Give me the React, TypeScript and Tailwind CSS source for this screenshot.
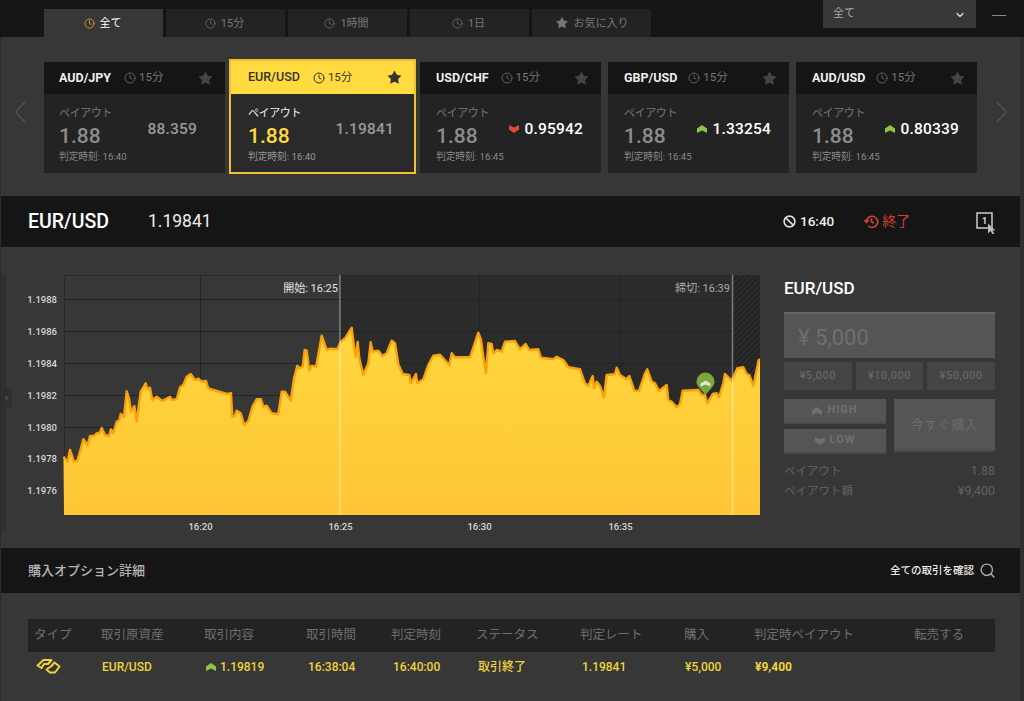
import React from "react";
import { ChevronDown, Clock, Search, Star } from "lucide-react";

const font = { fontFamily: '"Roboto", "Noto Sans CJK JP", sans-serif' };

// traced from the price line, in page coordinates
const line =
  "63.5,456.7 67.7,461.7 70,450 74,461.7 77.3,460.7 80,451.7 83.3,439.3 87.7,445 90,436 94,436 96.7,433.3 100,432.7 101.7,428 105,435 109,436 111,429.3 113.3,433.3 116.7,421.7 119.3,420.7 120.7,414 124,416.7 126.7,391.3 129,398.3 131,411.7 134.3,406 136.7,421.7 140.7,391.7 145.7,383.3 147.3,389 150,387.7 152.3,400 156.7,396.7 162.3,401 170,396.7 171.7,400 176.7,399.3 180,387.3 183.3,385 186.7,376.7 190.7,374 195,380 198.3,378.7 201.7,381.7 206,381 208.3,388.3 216.7,391 226.7,394 231,393.3 232.3,416.7 234.7,416 236.7,410.7 240.7,413.3 244.3,425 248.3,421 252.7,406 256.7,399.3 261,399.3 263.3,406.7 266.7,405.7 271.7,413.3 278.3,414.3 281.7,391.7 285,391.7 290.7,400.7 294,378.3 297.3,365.7 299,368.3 302.7,366.7 304.7,350 306.7,350.7 309.3,370.7 311.7,365.7 316,366.7 319,351 321.7,335.7 326.7,350 330,348.7 337.3,349.3 340.7,341.7 345,338.3 351.7,327.7 354,346.7 355.7,356.7 357.7,342 359.3,358.3 363.3,375 368.3,363.3 370.7,342.3 372.7,351.7 378.3,350.7 382.3,356 386.7,353.3 391.7,340.7 395,343.3 398.3,364 402.7,374 409.3,375 410.7,383.3 416,374 417.3,383.3 423.3,379.3 428.3,365 433.3,355.7 440,354.7 449.3,365 451.7,353.3 455,357.3 470,357.3 478.3,332.7 481,340 483.3,356.7 486,373 488.3,343.3 491.7,344 493.3,353.3 496.7,350 501.7,351.7 505,341.7 515,341 520,349.3 525.7,344 529.3,350 538.3,349.3 541,357.7 553.3,359.3 556.7,356.7 563.3,360 568.3,367.3 580,369.3 585,383.3 588.3,386 592.7,376 594,388.3 596.7,381.7 600,386 604,397.3 606.7,375 615,374.3 616.7,367.7 620,375 626.7,379.3 629.3,376 634.3,390.7 639,391 645,373.3 647.3,369.3 651.7,381.7 655,383.3 659,391 666.7,385 668.3,400 671.7,401.7 676.7,407.3 680,404 682.7,390.7 698.3,390 701.7,395 705,395 707.3,403.3 712.7,394 716.7,393.3 719,397.3 723.3,383.3 725,374 731.7,380.7 737.3,368.3 743.3,367.3 746.7,374 749.3,375 753.3,386 756,373.3 758.7,360 760,359.3";

const yLabels = [
  ["1.1988", 299.5],
  ["1.1986", 331.5],
  ["1.1984", 363.5],
  ["1.1982", 395.5],
  ["1.1980", 427.5],
  ["1.1978", 458.5],
  ["1.1976", 490.5],
] as const;

const xLabels = [
  ["16:20", 200.5],
  ["16:25", 340.5],
  ["16:30", 479.5],
  ["16:35", 620.5],
] as const;

const UpMark = ({ className = "" }: { className?: string }) => (
  <svg viewBox="0 0 10 8" className={`w-[10px] h-[8px] ${className}`} fill="#8cc63f">
    <path d="M0 3.4 L5 0 L10 3.4 V8 L5 5.4 L0 8 Z" />
  </svg>
);

const DownMark = ({ className = "" }: { className?: string }) => (
  <svg viewBox="0 0 10 8" className={`w-[10px] h-[8px] ${className}`} fill="#e0483a">
    <path d="M0 0 L5 2.6 L10 0 V4.6 L5 8 L0 4.6 Z" />
  </svg>
);

const tabs = [
  { label: "全て", active: true },
  { label: "15分" },
  { label: "1時間" },
  { label: "1日" },
];

const cards = [
  { pair: "AUD/JPY", price: "88.359", time: "16:40", left: "pl-[15px]", right: "pr-[28px]", clockGap: "ml-[13px]" },
  { pair: "EUR/USD", price: "1.19841", time: "16:40", left: "pl-[17px]", right: "pr-[20px]", clockGap: "ml-[13px]", active: true },
  { pair: "USD/CHF", price: "0.95942", time: "16:45", left: "pl-[16px]", right: "pr-[18px]", clockGap: "ml-[12px]", dir: "down" },
  { pair: "GBP/USD", price: "1.33254", time: "16:45", left: "pl-[16px]", right: "pr-[18px]", clockGap: "ml-[11px]", dir: "up" },
  { pair: "AUD/USD", price: "0.80339", time: "16:45", left: "pl-[16px]", right: "pr-[18px]", clockGap: "ml-[11px]", dir: "up" },
];

const Card = ({ card }: { card: (typeof cards)[number] }) => {
  if (card.active) {
    return (
      <div className="w-[187px] h-[115px] -mx-[3px] -mt-[3px] -mb-[1px] shrink-0 border-2 border-[#f5bd35] bg-[#2a2a2a] flex flex-col">
        <div className={`h-[33px] bg-[#ffdb40] flex items-center ${card.left} pr-[13px] text-[#333] shrink-0`}>
          <span className="text-[12.5px] font-medium">{card.pair}</span>
          <Clock size={12} strokeWidth={2} className={card.clockGap} />
          <span className="ml-[3px] text-[11.5px]">15分</span>
          <Star size={13} fill="#333" strokeWidth={0} className="ml-auto scale-125" />
        </div>
        <div className={`flex-1 flex ${card.left} ${card.right} justify-between`}>
          <div>
            <div className="mt-[11px] text-[11px] tracking-[-0.4px] leading-[17px] text-[#eee]">ペイアウト</div>
            <div className="text-[21px] leading-[26px] mt-[1px] font-medium text-[#fedb40]">1.88</div>
            <div className="mt-[1px] text-[9.7px] leading-[13px] text-[#999]">判定時刻: {card.time}</div>
          </div>
          <div className="mt-[26px] text-[15.5px] leading-[18px] font-medium text-[#999] tracking-[0.2px]">{card.price}</div>
        </div>
      </div>
    );
  }
  return (
    <div className="w-[181px] h-[111px] shrink-0 bg-[#232323] flex flex-col">
      <div className={`h-[32px] bg-[#151515] flex items-center ${card.left} pr-[13px] text-[#777] shrink-0`}>
        <span className="text-[12.5px] font-bold text-[#eee]">{card.pair}</span>
        <Clock size={12} strokeWidth={1.5} className={card.clockGap} />
        <span className="ml-[3px] text-[11.5px]">15分</span>
        <Star size={13} fill="#444444" strokeWidth={0} className="ml-auto scale-125" />
      </div>
      <div className={`flex-1 flex ${card.left} ${card.right} justify-between`}>
        <div>
          <div className="mt-[11px] text-[11px] tracking-[-0.4px] leading-[17px] text-[#777]">ペイアウト</div>
          <div className="text-[21px] leading-[26px] mt-[1px] font-medium text-[#8c8c8c]">1.88</div>
          <div className="mt-[1px] text-[9.7px] leading-[13px] text-[#8a8a8a]">判定時刻: {card.time}</div>
        </div>
        <div
          className={`mt-[26px] self-start flex items-center gap-[5px] text-[15.5px] leading-[18px] font-medium tracking-[0.2px] ${
            card.dir ? "text-white" : "text-[#999]"
          }`}
        >
          {card.dir === "up" && <UpMark />}
          {card.dir === "down" && <DownMark />}
          {card.price}
        </div>
      </div>
    </div>
  );
};

const Chart = () => (
  <svg viewBox="12 275 754 260" className="w-[754px] h-[260px] shrink-0" style={font}>
    <defs>
      <linearGradient id="area" x1="0" y1="0" x2="0" y2="1">
        <stop offset="0" stopColor="#ffd63e" />
        <stop offset="1" stopColor="#ffc636" />
      </linearGradient>
      <pattern id="hatch" width="4" height="4" patternUnits="userSpaceOnUse" patternTransform="rotate(-45)">
        <rect width="4" height="4" fill="#2b2b2b" />
        <rect width="4" height="1.5" fill="#1f1f1f" />
      </pattern>
    </defs>
    <rect x="64" y="275" width="276" height="240" fill="#373737" />
    <rect x="340" y="275" width="420" height="240" fill="#2b2b2b" />
    <rect x="732" y="275" width="28" height="240" fill="url(#hatch)" />
    <path d="M64.5 515V275.5H760" fill="none" stroke="#2a2a2a" />
    {yLabels.map(([t, y]) => (
      <g key={t}>
        <line x1="64" x2="732" y1={y} y2={y} stroke="#232323" />
        <text x="57" y={y + 3.5} textAnchor="end" fontSize="9.5" fontWeight="500" fill="#d8d8d8">
          {t}
        </text>
      </g>
    ))}
    {xLabels.map(([t, x]) => (
      <g key={t}>
        <line x1={x} x2={x} y1="275" y2="515" stroke="#232323" />
        <text x={x} y="530" textAnchor="middle" fontSize="9.5" fontWeight="500" fill="#d8d8d8">
          {t}
        </text>
      </g>
    ))}
    <polygon points={`64,515 ${line} 760,515`} fill="url(#area)" />
    <polyline points={line} fill="none" stroke="#f9a20a" strokeWidth="2.4" strokeLinejoin="round" />
    <line x1="340" x2="340" y1="275" y2="515" stroke="#ffffff" strokeOpacity="0.4" strokeWidth="1.5" />
    <line x1="732.5" x2="732.5" y1="275" y2="515" stroke="#ffffff" strokeOpacity="0.4" strokeWidth="1.5" />
    <text x="338" y="292" textAnchor="end" fontSize="11" fill="#e4e4e4">
      開始: 16:25
    </text>
    <text x="730" y="292" textAnchor="end" fontSize="11" fill="#a8a8a8">
      締切: 16:39
    </text>
    <path d="M705.5 372.5a9 9 0 0 1 9 9c0 5-5 8-9 13.5c-4-5.500-9-8.500-9-13.500a9 9 0 0 1 9-9z" fill="#7aa93a" />
    <path d="M700.500 383.500L705.500 380.500L710.500 383.500V386.500L705.500 384.500L700.500 386.500Z" fill="#e6e6e6" />
  </svg>
);

export default function App() {
  return (
    <div style={font} className="w-[1024px] h-[701px] overflow-hidden bg-[#373737] flex flex-col">
      {/* top tabs */}
      <div className="h-[37px] bg-[#151515] flex shrink-0 pl-[44px]">
        <div className="flex gap-[3px] mt-[9px]">
          {tabs.map((t) => (
            <div
              key={t.label}
              className={`w-[119px] h-[28px] flex items-center justify-center gap-[5px] text-[11px] pr-[2px] pt-[2px] ${
                t.active ? "bg-[#373737] text-white" : "bg-[#232323] text-[#777]"
              }`}
            >
              <Clock size={11} strokeWidth={1.6} className={`mb-[2px] ${t.active ? "text-[#f0b92f]" : "text-[#777]"}`} />
              <span>{t.label}</span>
            </div>
          ))}
          <div className="w-[119px] h-[28px] flex items-center justify-center gap-[5px] text-[11px] pt-[2px] bg-[#232323] text-[#777]">
            <Star size={14} fill="#777" strokeWidth={0} className="mb-[2px]" />
            <span>お気に入り</span>
          </div>
        </div>
        <div className="ml-[172px] w-[153px] h-[28px] bg-[#383838] flex items-center justify-between pl-[10px] pr-[10px] pt-[1px] text-[11px] text-[#aaa]">
          <span>全て</span>
          <ChevronDown size={12} strokeWidth={2.5} className="text-[#ddd]" />
        </div>
        <div className="ml-[16px] mt-[15px] w-[14px] h-[1px] bg-[#888]" />
      </div>

      <div className="flex-1 flex flex-col border-l border-r-4 border-l-[#2b2b2b] border-r-[#2e2e2e] min-h-0">
        {/* rate cards */}
        <div className="h-[159px] flex pt-[25px] shrink-0">
          <div className="w-[43px] pl-[14px] pt-[39px] shrink-0">
            <svg viewBox="0 0 11 22" className="w-[11px] h-[22px]" fill="none" stroke="#666" strokeWidth="1">
              <path d="M10.500 0.500L0.500 11L10.500 21.500" />
            </svg>
          </div>
          <div className="flex gap-[7px] items-start">
            {cards.map((c) => (
              <Card key={c.pair} card={c} />
            ))}
          </div>
          <div className="pl-[19px] pt-[39px]">
            <svg viewBox="0 0 11 22" className="w-[11px] h-[22px]" fill="none" stroke="#666" strokeWidth="1">
              <path d="M0.500 0.500L10.500 11L0.500 21.500" />
            </svg>
          </div>
        </div>

        {/* selected pair */}
        <div className="h-[51px] bg-[#151515] flex items-center pl-[27px] pr-[20px] shrink-0 whitespace-nowrap">
          <span className="text-[19.5px] font-medium text-white w-[120px] shrink-0">EUR/USD</span>
          <span className="text-[17.5px] text-[#eee] w-[63px] shrink-0">1.19841</span>
          <svg viewBox="0 0 14 14" className="ml-[572px] w-[13px] h-[13px] shrink-0" fill="none" stroke="#ddd" strokeWidth="1.800">
            <circle cx="7" cy="7" r="5.800" />
            <path d="M3 3L11 11" />
          </svg>
          <span className="ml-[4px] text-[13.5px] font-medium text-[#eee]">16:40</span>
          <svg viewBox="0 0 16 16" className="ml-[30px] w-[15px] h-[15px] shrink-0" fill="none" stroke="#d0402f" strokeWidth="1.800">
            <path d="M2.600 8A6 6 0 1 1 4.500 12.800" />
            <path d="M0.500 6.500L2.600 8.800L5 6.600" />
            <path d="M8 4.500V8.300L10.500 9.800" />
          </svg>
          <span className="ml-[3px] text-[14px] text-[#d0402f]">終了</span>
          <svg viewBox="0 0 20 22" className="ml-[66px] w-[20px] h-[22px] mt-[3px] shrink-0">
            <rect x="1" y="1" width="15" height="15" fill="none" stroke="#ccc" strokeWidth="1.500" />
            <path d="M12 11.500L19.500 18.500H16.500L18.500 22H16.500L14.500 19L12 21.500Z" fill="#bbb" />
            <text x="8.500" y="12" textAnchor="middle" fontSize="9" fontWeight="700" fill="#ddd">
              1
            </text>
          </svg>
        </div>

        {/* chart and order panel */}
        <div className="h-[301px] flex shrink-0 relative">
          <div className="w-[5px] h-[256px] mt-[28px] bg-[#2f2f2f] shrink-0" />
          <div className="absolute left-0 top-[142px] w-[11px] h-[18px] bg-[#2f2f2f] flex items-center justify-center text-[9px] leading-none text-[#888]">
            ›
          </div>
          <div className="ml-[6px] mt-[28px]">
            <Chart />
          </div>
          <div className="ml-[18px] w-[211px] pt-[31px] flex flex-col shrink-0">
            <div className="text-[17px] leading-[20px] font-medium text-white">EUR/USD</div>
            <div className="mt-[14px] h-[46px] bg-[#555] border-t-2 border-t-[#666] flex items-center pl-[14px] pt-[2px] text-[22px] text-[#6f6f6f]">
              ¥ 5,000
            </div>
            <div className="mt-[4px] grid grid-cols-3 gap-[4px]">
              {["¥5,000", "¥10,000", "¥50,000"].map((v) => (
                <div key={v} className="h-[28px] bg-[#454545] flex items-center justify-center text-[11px] font-medium tracking-[0.5px] text-[#666]">
                  {v}
                </div>
              ))}
            </div>
            <div className="mt-[9px] flex gap-[8px]">
              <div className="w-[102px] flex flex-col gap-[5px]">
                <div className="h-[25px] bg-[#555] border-b-2 border-b-[#4a4a4a] flex items-center justify-center gap-[5px] text-[11px] font-bold tracking-[1px] text-[#707070]">
                  <svg viewBox="0 0 10 8" className="w-[10px] h-[8px]" fill="#707070">
                    <path d="M0 3.400L5 0L10 3.400V8L5 5.400L0 8Z" />
                  </svg>
                  HIGH
                </div>
                <div className="h-[25px] bg-[#555] border-b-2 border-b-[#4a4a4a] flex items-center justify-center gap-[5px] text-[11px] font-bold tracking-[1px] text-[#707070]">
                  <svg viewBox="0 0 10 8" className="w-[10px] h-[8px]" fill="#707070">
                    <path d="M0 0L5 2.600L10 0V4.600L5 8L0 4.600Z" />
                  </svg>
                  LOW
                </div>
              </div>
              <div className="w-[101px] h-[53px] bg-[#555] border-b-2 border-b-[#4a4a4a] flex items-center justify-center text-[13px] tracking-[0.5px] text-[#6b6b6b]">
                今すぐ購入
              </div>
            </div>
            <div className="mt-[7px] flex justify-between items-center text-[11.5px] leading-[20px] text-[#626262]">
              <span>ペイアウト</span>
              <span className="text-[12.5px]">1.88</span>
            </div>
            <div className="flex justify-between items-center text-[11.5px] leading-[20px] text-[#626262]">
              <span>ペイアウト額</span>
              <span className="text-[12.5px]">¥9,400</span>
            </div>
          </div>
        </div>

        {/* purchased options */}
        <div className="h-[45px] bg-[#151515] flex items-center pl-[27px] pr-[24px] shrink-0">
          <span className="text-[13px] pt-[1px] font-medium text-[#b5b5b5]">購入オプション詳細</span>
          <span className="ml-auto text-[10.500px] font-medium text-[#eee]">全ての取引を確認</span>
          <Search size={17} strokeWidth={2} className="ml-[5px] text-[#aaa]" />
        </div>
        <div className="pl-[27px] pr-[25px] pt-[26px]">
          <div className="h-[33px] bg-[#232323] grid grid-cols-[73px_103px_102px_85px_85px_104px_104px_70px_160px_1fr] items-center text-[12.5px] text-[#6f6f6f]">
            <span className="pl-[6px]">タイプ</span>
            <span>取引原資産</span>
            <span>取引内容</span>
            <span>取引時間</span>
            <span>判定時刻</span>
            <span>ステータス</span>
            <span>判定レート</span>
            <span>購入</span>
            <span>判定時ペイアウト</span>
            <span>転売する</span>
          </div>
          <div className="h-[30px] grid grid-cols-[73px_103px_102px_85px_85px_104px_104px_70px_160px_1fr] items-center text-[12px] font-medium text-[#edd33d]">
            <span className="pl-[8px]">
              <svg viewBox="0 0 25 18" className="w-[25px] h-[18px] mb-[3px]" fill="none" stroke="#edd33d" strokeWidth="2" strokeLinejoin="round">
                <path d="M1.500 8.500L7.500 3H15.500L12 7H8L5.500 11Z" />
                <path d="M10.500 12.500L14 15.500H19L23.500 9.500L18.500 5.500L15 9.500L12.500 11Z" />
              </svg>
            </span>
            <span className="pl-[1px]">EUR/USD</span>
            <span className="pl-[2px] flex items-center gap-[4px]">
              <UpMark />
              1.19819
            </span>
            <span className="pl-[2px]">16:38:04</span>
            <span className="pl-[2px]">16:40:00</span>
            <span className="pl-[2px]">取引終了</span>
            <span className="pl-[2px]">1.19841</span>
            <span className="pl-[1px]">¥5,000</span>
            <span className="pl-[1px] font-bold">¥9,400</span>
            <span />
          </div>
        </div>
      </div>
    </div>
  );
}
